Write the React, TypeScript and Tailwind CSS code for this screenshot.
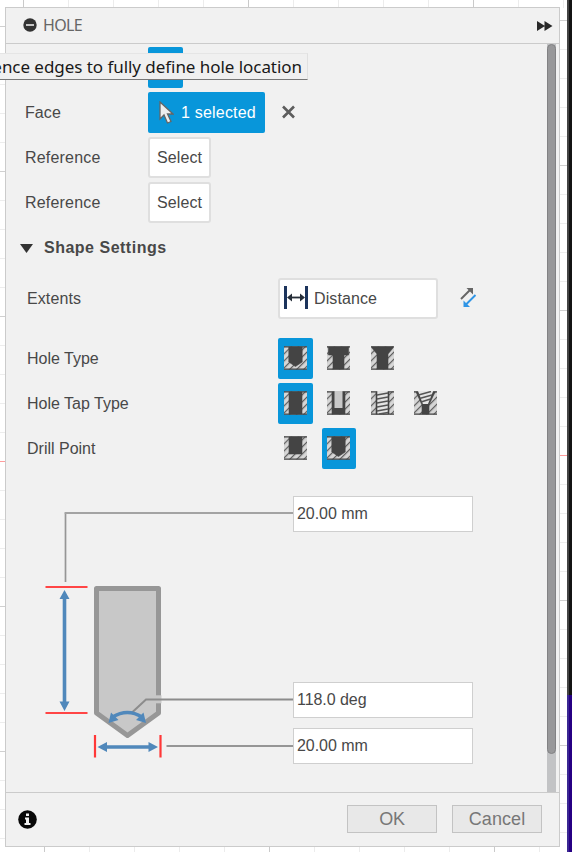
import React from "react";

type Shape = "drill" | "counterbore" | "countersink" | "simple" | "clearance" | "tapped" | "taper" | "flat";

const CAVITY: Record<Shape, string> = {
  drill: "M4.8 1H18.2V16L11.5 20.5L4.8 16Z",
  counterbore: "M1.5 1H21.5V9H17V23H6V9H1.5Z",
  countersink: "M1 1H22V2L17 8V23H6V8L1 2Z",
  simple: "M5 1H18V23H5Z",
  clearance: "M5 1H18V23H5Z",
  tapped: "M5 1H18V23H5Z",
  taper: "M2 1H21L15 14V23H8V14Z",
  flat: "M5 1H18V18H5Z",
};

function HoleIcon({ shape }: { shape: Shape }) {
  return (
    <svg width="23" height="24" viewBox="0 0 23 24" className="block">
      <defs>
        <pattern id={`hatch-${shape}`} width="5" height="5" patternUnits="userSpaceOnUse" patternTransform="rotate(45)">
          <rect width="5" height="5" fill="#d6d6d6" />
          <rect width="1.2" height="5" fill="#606060" />
        </pattern>
      </defs>
      <rect y="0.5" width="23" height="23" fill={`url(#hatch-${shape})`} />
      <path d="M0 .8H23M0 23.2H23" stroke="#444" strokeWidth="1.3" />
      <path d={CAVITY[shape]} fill="#444" stroke="#444" strokeWidth="0.6" />
      {shape === "clearance" && <path d="M7.5 0H15.5V17H7.5Z" fill="#c8c8c8" />}
      {shape === "tapped" && (
        <>
          <path d="M6.3 0H16.7V22.5H6.3Z" fill="#e5e5e5" />
          <path d="M6 4L17 2M6 8L17 6M6 12L17 10M6 16L17 14M6 20L17 18M8 23L17 21.5" stroke="#555" strokeWidth="1.5" />
        </>
      )}
      {shape === "taper" && (
        <>
          <path d="M4 0H19.2L14 13H8.9Z" fill="#e5e5e5" />
          <path d="M4.5 4L17 0.5M5.5 7.5L18 4M7 11L16.5 8" stroke="#555" strokeWidth="1.5" />
        </>
      )}
    </svg>
  );
}

function HoleRow({ label, shapes, active }: { label: string; shapes: Shape[]; active: number }) {
  return (
    <div className="flex h-[41px] items-center">
      <span className="w-[252px] pl-[1px]">{label}</span>
      <div className="flex gap-[9px]">
        {shapes.map((shape, i) => (
          <button
            key={shape}
            className={`flex h-[41px] w-[34.5px] items-center justify-center rounded-[2px] pb-px ${i === active ? "bg-[#0896da]" : ""}`}
          >
            <HoleIcon shape={shape} />
          </button>
        ))}
      </div>
    </div>
  );
}

function ReferenceRow() {
  return (
    <div className="flex h-[41px] items-center">
      <span className="w-[124px] pl-[1px] tracking-[0.2px]">Reference</span>
      <button className="h-[41px] w-[63px] rounded-[3px] border-2 border-[#dfdfdf] bg-white tracking-[0.1px]">Select</button>
    </div>
  );
}

function Field({ value, className = "" }: { value: string; className?: string }) {
  return (
    <div className={`flex h-9 w-[180px] items-center border-[1.5px] border-[#cfcfcf] bg-white pl-[3px] tracking-[-0.05px] ${className}`}>
      {value}
    </div>
  );
}

const darkRow = (k: number) => k % 5 === 0;

function Workspace() {
  const rows = Array.from({ length: 30 }, (_, k) => k);
  const columns = Array.from({ length: 13 }, (_, k) => k);
  return (
    <svg className="absolute inset-0" width="572" height="852" shapeRendering="crispEdges">
      {rows.map((k) => (
        <g key={k}>
          <rect x="0" y={26 + k * 29} width="6" height="1" fill={k === 15 ? "#ff9c9c" : darkRow(k) ? "#d0d0d0" : "#ededed"} />
          <rect x="559" y={20 + k * 29} width="8" height="1" fill={k === 15 ? "#ff9c9c" : darkRow(k) ? "#d0d0d0" : "#ededed"} />
        </g>
      ))}
      {columns.map((k) => (
        <g key={k}>
          <rect x={23 + k * 45} y="0" width="1" height="8" fill={darkRow(k) ? "#cacaca" : "#ececec"} />
          <rect x={44 + k * 45} y="846" width="1" height="6" fill={darkRow(k) ? "#cacaca" : "#ececec"} />
        </g>
      ))}
      <rect x="567" width="2" height="852" fill="#444" />
      <rect x="569" width="3" height="852" fill="#141414" />
      <rect x="567" y="695" width="2" height="157" fill="#3b2893" />
      <rect x="569" y="695" width="3" height="157" fill="#270084" />
    </svg>
  );
}

function HoleDiagram() {
  return (
    <svg width="287" height="290" viewBox="6 490 287 290" className="block shrink-0">
      <path d="M65.5 582V512.5" fill="none" stroke="#969696" strokeWidth="1.7" />
      <path d="M64.7 513H293" stroke="#a3a3a3" strokeWidth="2.2" />
      <path d="M96.5 588.5H158.5V713L127.5 735.5L96.5 713Z" fill="#c8c8c8" stroke="#979797" strokeWidth="5" strokeLinejoin="round" />
      <path d="M155.5 699.3H161.5" stroke="#c8c8c8" strokeWidth="8" />
      <path d="M132 712.5L146 699.5H293" fill="none" stroke="#8c8c8c" strokeWidth="2" />
      <path d="M166.500 746H293" stroke="#969696" strokeWidth="2" />
      <path d="M45.500 587H87.500M45.500 713H87.500" stroke="#ff4545" strokeWidth="2.200" />
      <path d="M95 735V757.500M160.500 735V757.500" stroke="#ff3838" strokeWidth="2.200" />
      <g fill="#5088bb">
        <path d="M64.500 590L69.500 599H59.500ZM64.500 711L69.500 701.500H59.500Z" />
        <path d="M97.500 747L107 742V752ZM158 747L148.500 742V752Z" />
        <path d="M108.500 723L111 712.500L118.500 720ZM146 723L143.500 712.500L136 720Z" />
      </g>
      <path d="M64.500 597V703M105 747H150" stroke="#5088bb" strokeWidth="3.600" />
      <path d="M112.500 717Q127.500 708 142 717" fill="none" stroke="#5088bb" strokeWidth="3.300" />
    </svg>
  );
}

export default function App() {
  return (
    <main className="relative h-[852px] w-[572px] overflow-hidden bg-white font-['Liberation_Sans',Arial,sans-serif] text-[16px] leading-5 text-[#484848]">
      <Workspace />
      <div className="relative pt-[7px] pl-[5px]">
        <section className="flex h-[840px] w-[555px] flex-col border-[1.5px] border-[#cbcbcb] bg-[#f1f1f1]">
          <header className="flex h-[36px] shrink-0 items-center border-b-[1.5px] border-[#cbcbcb] pr-[6px] pb-[1px] pl-[17px]">
            <svg width="14" height="14" viewBox="0 0 14 14">
              <circle cx="7" cy="7" r="6.7" fill="#333" />
              <path d="M3 7H11" stroke="#ededed" strokeWidth="1.600" />
            </svg>
            <h1 className="ml-[6px] font-['Noto_Sans',sans-serif] text-[16px] tracking-[-0.7px] text-[#666]">HOLE</h1>
            <svg className="mt-px ml-auto" width="16" height="10" viewBox="0 0 16 10">
              <path d="M0 0L8 5L0 10ZM7.500 0L15.500 5L7.500 10Z" fill="#292929" />
            </svg>
          </header>

          <div className="flex min-h-0 flex-1 pr-[3px]">
            <div className="min-w-0 flex-1">
              <div className="flex flex-col gap-1 pt-[3px] pl-[18px]">
                <div className="flex h-[41px]">
                  <div className="ml-[124px] w-[35px] rounded-[2px] bg-[#0896da]" />
                </div>
                <div className="flex h-[41px] items-center">
                  <span className="w-[124px] pl-[1px] tracking-[0.1px]">Face</span>
                  <button className="flex h-[41px] w-[117px] items-center rounded-[2px] bg-[#0896da] pl-[11px] text-white">
                    <svg width="15" height="24" viewBox="0 0 15 24">
                      <path d="M1 1V18L5 14L8.500 22L12 20.500L8.500 13H14Z" fill="#eeeeee" stroke="#666" strokeWidth="1.300" />
                    </svg>
                    <span className="ml-[7px] whitespace-nowrap tracking-[0.2px]">1 selected</span>
                  </button>
                  <svg className="mb-px ml-[17px]" width="13" height="14" viewBox="0 0 13 14">
                    <path d="M1 1.500L12 12.500M12 1.500L1 12.500" stroke="#5d5d5d" strokeWidth="2.600" />
                  </svg>
                </div>
                <ReferenceRow />
                <ReferenceRow />
              </div>

              <div className="mt-[14px] flex h-[22px] items-center pl-[14px]">
                <svg width="13" height="9" viewBox="0 0 13 9">
                  <path d="M0 0H13L6.500 9Z" fill="#333" />
                </svg>
                <h2 className="ml-[11px] text-[16px] font-bold tracking-[0.5px]">Shape Settings</h2>
              </div>

              <div className="mt-[19px] pl-5">
                <div className="flex h-[41px] items-center">
                  <span className="w-[252px] pl-[1px] tracking-[0.1px]">Extents</span>
                  <div className="flex h-[41px] w-[160px] items-center rounded-[3px] border-2 border-[#dfdfdf] bg-white pl-[4px]">
                    <svg className="mb-[2px]" width="24" height="24" viewBox="0 0 24 24">
                      <path d="M1.500 0V23M22.500 0V23" stroke="#1c345c" strokeWidth="3" />
                      <path d="M5 11.500H19" stroke="#262e39" strokeWidth="1.800" />
                      <path d="M3 11.500L8 7.500V15.500ZM21 11.500L16 7.500V15.500Z" fill="#262e39" />
                    </svg>
                    <span className="ml-[6px] tracking-[0.1px]">Distance</span>
                  </div>
                  <svg className="mb-[2px] ml-[22px]" width="17" height="21" viewBox="0 0 17 21">
                    <path d="M1 12L10 3" stroke="#666" strokeWidth="1.900" />
                    <path d="M6.500 1H13V7.500Z" fill="#666" />
                    <path d="M15.500 8L6 17.500" stroke="#3095e6" strokeWidth="1.900" />
                    <path d="M3.500 13.500V20H10Z" fill="#3095e6" />
                  </svg>
                </div>
                <div className="mt-[19px] flex flex-col gap-1">
                  <HoleRow label="Hole Type" shapes={["drill", "counterbore", "countersink"]} active={0} />
                  <HoleRow label="Hole Tap Type" shapes={["simple", "clearance", "tapped", "taper"]} active={0} />
                  <HoleRow label="Drill Point" shapes={["flat", "drill"]} active={1} />
                </div>
              </div>

              <div className="mt-[21px] flex">
                <HoleDiagram />
                <div className="pt-[6px]">
                  <Field value="20.00 mm" />
                  <Field value="118.0 deg" className="mt-[150px]" />
                  <Field value="20.00 mm" className="mt-[10px]" />
                </div>
              </div>
            </div>
            <div className="w-[9px] shrink-0 bg-[#c2c3c5]">
              <div className="h-[710px] rounded-[5px] border border-[#828284] bg-[#98989a]" />
            </div>
          </div>

          <footer className="flex h-[54px] shrink-0 items-center border-t-[1.5px] border-[#cbcbcb] pr-[17px] pl-[12px]">
            <svg width="19" height="19" viewBox="0 0 19 19">
              <circle cx="9.500" cy="9.500" r="9.300" fill="#080808" />
              <path d="M8 3.500H11V6H8ZM7 7.500H11V13H12.500V15H6.500V13H8V9.500H7Z" fill="#f1f1f1" />
            </svg>
            <button className="mb-px ml-auto h-7 w-[90px] border-[1.500px] border-[#c3c3c3] bg-[#e8e8e8] text-[18px] tracking-[-0.2px] text-[#777]">OK</button>
            <button className="mb-px ml-[15px] h-7 w-[90px] border-[1.500px] border-[#c3c3c3] bg-[#e8e8e8] text-[18px] tracking-[0.1px] text-[#777]">Cancel</button>
          </footer>
        </section>
      </div>

      <div className="absolute top-[53px] left-0 flex h-[27px] w-[308px] items-center justify-end border-t border-r border-b border-t-[#e5e5e5] border-r-[#e0e0e0] border-b-[#777] bg-[#f0f0f0] pr-[5px] font-['Noto_Sans',sans-serif] text-[17px] tracking-[-0.050px] whitespace-nowrap text-[#191919]">
        ence edges to fully define hole location
      </div>
    </main>
  );
}
